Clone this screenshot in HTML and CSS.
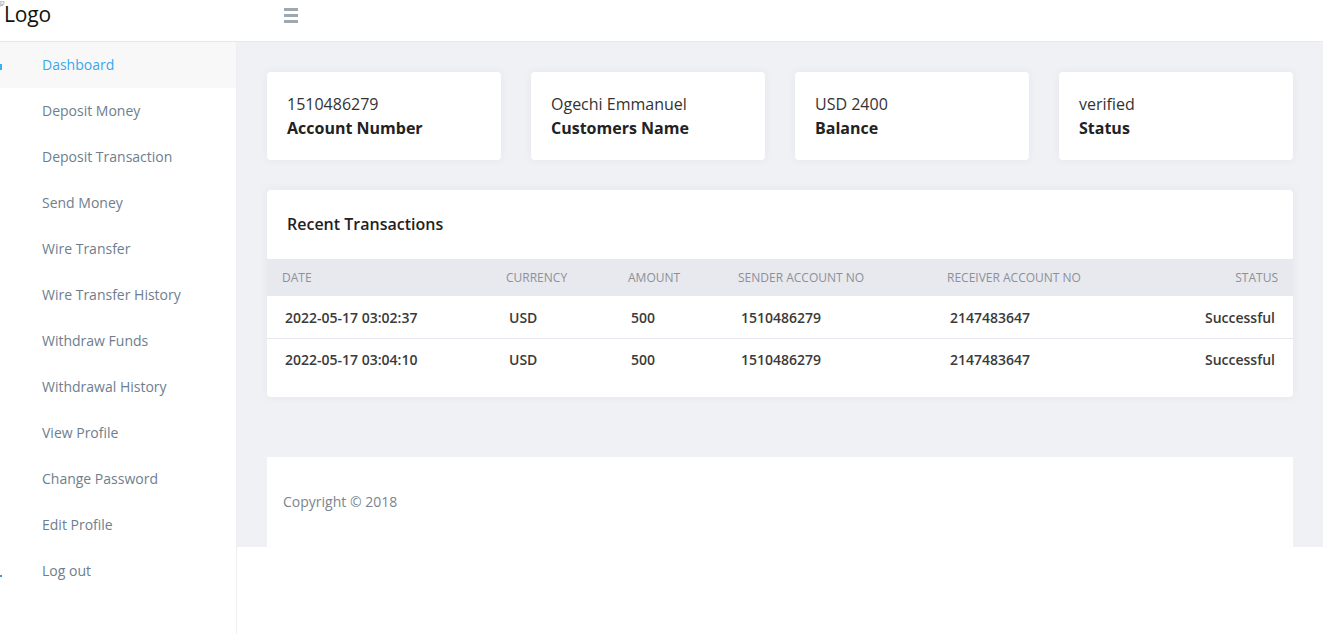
FILE: index.html
```html
<!DOCTYPE html>
<html lang="en">
<head>
<meta charset="utf-8">
<title>Dashboard</title>
<link rel="stylesheet" href="styles.css">
</head>
<body>
<header class="topbar">
  <div class="brand">
    <svg class="broken" width="5" height="8" viewBox="0 0 5 8"><path d="M0 0h4v3l-1 1-1-1-2 2z" fill="#dfe6ea" stroke="#9aa6ad" stroke-width="0.6"/><path d="M0.5 5.5l1.5-1.5 1 1" fill="none" stroke="#6aa06a" stroke-width="0.6"/></svg>
    <span class="logo-text">Logo</span>
  </div>
  <div class="burger" aria-label="menu"><span class="bar"></span><span class="bar"></span><span class="bar"></span></div>
</header>
<div class="layout">
  <nav class="sidebar">
    <a class="nav-item active" href="#"><span class="nav-ico"></span>Dashboard</a>
    <a class="nav-item" href="#">Deposit Money</a>
    <a class="nav-item" href="#">Deposit Transaction</a>
    <a class="nav-item" href="#">Send Money</a>
    <a class="nav-item" href="#">Wire Transfer</a>
    <a class="nav-item" href="#">Wire Transfer History</a>
    <a class="nav-item" href="#">Withdraw Funds</a>
    <a class="nav-item" href="#">Withdrawal History</a>
    <a class="nav-item" href="#">View Profile</a>
    <a class="nav-item" href="#">Change Password</a>
    <a class="nav-item" href="#">Edit Profile</a>
    <a class="nav-item" href="#"><span class="nav-ico small"></span>Log out</a>
  </nav>
  <main class="main">
    <section class="stats">
      <div class="stat-card"><div class="stat-value">1510486279</div><div class="stat-label">Account Number</div></div>
      <div class="stat-card"><div class="stat-value">Ogechi Emmanuel</div><div class="stat-label">Customers Name</div></div>
      <div class="stat-card"><div class="stat-value">USD 2400</div><div class="stat-label">Balance</div></div>
      <div class="stat-card"><div class="stat-value">verified</div><div class="stat-label">Status</div></div>
    </section>
    <section class="panel">
      <h2 class="panel-title">Recent Transactions</h2>
      <table class="tx">
        <colgroup><col class="c1"><col class="c2"><col class="c3"><col class="c4"><col class="c5"><col></colgroup>
        <thead>
          <tr><th>Date</th><th>Currency</th><th>Amount</th><th>Sender Account No</th><th>Receiver Account No</th><th class="right">Status</th></tr>
        </thead>
        <tbody>
          <tr><td>2022-05-17 03:02:37</td><td>USD</td><td>500</td><td>1510486279</td><td>2147483647</td><td class="right">Successful</td></tr>
          <tr><td>2022-05-17 03:04:10</td><td>USD</td><td>500</td><td>1510486279</td><td>2147483647</td><td class="right">Successful</td></tr>
        </tbody>
      </table>
    </section>
    <footer class="footer">Copyright © 2018</footer>
  </main>
</div>
</body>
</html>
```
FILE: styles.css
```css
* { box-sizing: border-box; }
html, body { margin: 0; padding: 0; background: #fff; }
body { font-family: "Open Sans", "Noto Sans", sans-serif; color: #333; overflow: hidden; }

.topbar {
  height: 42px;
  border-bottom: 1px solid #e6e7ea;
  display: flex;
  align-items: flex-start;
  background: #fff;
}
.brand { width: 237px; display: flex; align-items: flex-start; padding-top: 1px; }
.broken { flex: none; }
.logo-text { font-size: 21px; line-height: 26px; color: #111; margin-left: -1px; letter-spacing: -0.2px; }
.burger {
  margin-left: 47px; margin-top: 8px;
  width: 14px;
  display: flex; flex-direction: column; gap: 3px;
}
.burger .bar { display: block; height: 3px; width: 14px; background: #9ea8b1; }

.layout { display: flex; align-items: flex-start; }
.sidebar {
  width: 237px; flex: none;
  height: calc(100vh - 42px);
  border-right: 1px solid #eceef2;
  background: #fff;
  display: flex; flex-direction: column;
}
.nav-item {
  position: relative;
  height: 46px; line-height: 46px;
  padding-left: 42px;
  font-size: 14px; color: #6e7e8e; text-decoration: none;
}
.nav-item.active { background: #f8f8f8; color: #3aa8ec; }
.nav-ico {
  position: absolute; left: 0; top: 22px;
  width: 2px; height: 6px; background: #39b1f0;
}
.nav-ico.small { top: 27px; height: 2px; background: #5a8fb8; }

.main {
  flex: 1;
  background: #f0f1f5;
  padding: 30px 30px 0;
}
.stats { display: grid; grid-template-columns: repeat(4, 1fr); gap: 30px; }
.stat-card {
  background: #fff; border-radius: 4px; height: 88px;
  padding: 21px 20px 0;
  box-shadow: 0 0 8px rgba(180, 185, 200, 0.18);
}
.stat-value { font-size: 16px; line-height: 22px; color: #333; }
.stat-label { font-size: 16px; line-height: 26px; font-weight: 700; color: #222; }

.panel {
  margin-top: 30px;
  background: #fff; border-radius: 4px;
  padding-bottom: 17px;
  box-shadow: 0 0 8px rgba(180, 185, 200, 0.18);
}
.panel-title { margin: 0; padding: 22px 20px 0; height: 69px; font-size: 16px; line-height: 24px; font-weight: 600; color: #222; }
.tx { width: 100%; border-collapse: collapse; }
.tx col.c1 { width: 224px; }
.tx col.c2 { width: 122px; }
.tx col.c3 { width: 110px; }
.tx col.c4 { width: 209px; }
.tx col.c5 { width: 250px; }
.tx th {
  background: #e8e9ee; height: 37px; padding: 0 15px;
  font-size: 12px; font-weight: 400; text-transform: uppercase; color: #8c9099; text-align: left;
}
.tx td {
  height: 42px; padding: 1px 18px 0;
  font-size: 14px; font-weight: 600; color: #3a3a3a; text-align: left;
}
.tx tbody tr + tr td { border-top: 1px solid #e8e9ee; }
.tx .right { text-align: right; }

.footer {
  margin-top: 60px; height: 90px;
  background: #fff;
  padding: 0 16px 2px;
  display: flex; align-items: center;
  font-size: 14px; color: #7a8590;
}
```
